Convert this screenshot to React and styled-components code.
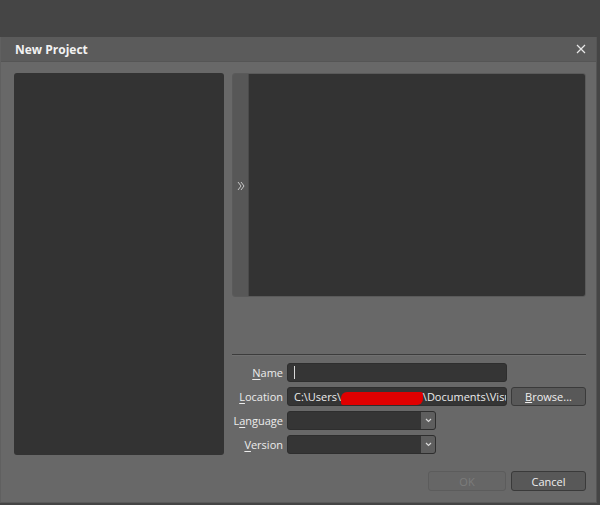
import React from 'react'
import styled, { createGlobalStyle } from 'styled-components'

const GlobalStyle = createGlobalStyle`
	html, body {
		margin: 0;
		padding: 0;
		background: #454545;
		font-family: "Open Sans", "Noto Sans", "DejaVu Sans", sans-serif;
	}
`

export default function App() {
	return (
		<>
			<GlobalStyle />
			<TopArea />
			<Dialog>
				<TitleBar>
					<Title>New Project</Title>
					<CloseButton aria-label='close'>
						<svg width='10' height='10' viewBox='0 0 10 10'>
							<path d='M1 1 L9 9 M9 1 L1 9' stroke='#e8e8e8' strokeWidth='1.2' />
						</svg>
					</CloseButton>
				</TitleBar>
				<Body>
					<TemplateList />
					<RightColumn>
						<Preview>
							<ExpandStrip>
								<svg width='8' height='10' viewBox='0 0 8 10'>
									<path d='M1 1 L4 5 L1 9 M4 1 L7 5 L4 9' stroke='#c8c8c8' strokeWidth='1' fill='none' />
								</svg>
							</ExpandStrip>
							<PreviewArea />
						</Preview>
						<Separator />
						<Form>
							<Label><u>N</u>ame</Label>
							<TextBox><Caret /></TextBox>
							<span />

							<Label><u>L</u>ocation</Label>
							<TextBox>
								<PathText>
									C:\Users\..<Redact />\Documents\Visu
								</PathText>
							</TextBox>
							<Button><u>B</u>rowse...</Button>

							<Label>L<u>a</u>nguage</Label>
							<Combo>
								<ComboDrop>
									<svg width='7' height='5' viewBox='0 0 7 5'>
										<path d='M1 1 L3.5 3.5 L6 1' stroke='#d8d8d8' strokeWidth='1.2' fill='none' />
									</svg>
								</ComboDrop>
							</Combo>
							<span />

							<Label><u>V</u>ersion</Label>
							<Combo>
								<ComboDrop>
									<svg width='7' height='5' viewBox='0 0 7 5'>
										<path d='M1 1 L3.5 3.5 L6 1' stroke='#d8d8d8' strokeWidth='1.2' fill='none' />
									</svg>
								</ComboDrop>
							</Combo>
							<span />
						</Form>
					</RightColumn>
				</Body>
				<Footer>
					<Button disabled wide>OK</Button>
					<Button>Cancel</Button>
				</Footer>
			</Dialog>
		</>
	)
}

// STYLED COMPONENTS
const TopArea = styled.div`
	height: 37px;
	background: #454545;
`
const Dialog = styled.div`
	width: 597px;
	height: 466px;
	box-sizing: border-box;
	background: #686868;
	border-right: 1px solid #555;
	border-bottom: 1px solid #5a5a5a;
	border-left: 1px solid #606060;
	display: flex;
	flex-direction: column;
`
const TitleBar = styled.div`
	height: 24px;
	background: #5b5b5b;
	border-bottom: 1px solid #555;
	display: flex;
	align-items: center;
	justify-content: space-between;
	padding: 0 10px 0 14px;
`
const Title = styled.span`
	color: #f2f2f2;
	font-size: 12px;
	font-weight: 700;
`
const CloseButton = styled.span`
	display: flex;
	align-items: center;
`
const Body = styled.div`
	display: grid;
	grid-template-columns: 210px 354px;
	gap: 8px;
	padding: 11px 0 0 13px;
`
const TemplateList = styled.div`
	height: 382px;
	background: #333;
	border-radius: 3px;
`
const RightColumn = styled.div`
	display: flex;
	flex-direction: column;
`
const Preview = styled.div`
	height: 224px;
	display: flex;
	border-radius: 3px;
	overflow: hidden;
	border: 1px solid #5a5a5a;
	box-sizing: border-box;
`
const ExpandStrip = styled.div`
	width: 15px;
	background: #575757;
	border-right: 1px solid #4a4a4a;
	display: flex;
	align-items: center;
	justify-content: center;
	padding-top: 2px;
`
const PreviewArea = styled.div`
	flex: 1;
	background: #333;
`
const Separator = styled.div`
	margin-top: 57px;
	height: 1px;
	background: #3c3c3c;
	border-bottom: 1px solid #707070;
`
const Form = styled.div`
	margin-top: 7px;
	display: grid;
	grid-template-columns: 51px 220px 75px;
	column-gap: 4px;
	row-gap: 5px;
	grid-auto-rows: 19px;
`
const Label = styled.span`
	color: #ececec;
	font-size: 11px;
	text-align: right;
	line-height: 19px;
	white-space: nowrap;
	u {
		text-underline-offset: 2px;
	}
`
const TextBox = styled.div`
	background: #353535;
	border: 1px solid #2e2e2e;
	border-radius: 3px;
	box-sizing: border-box;
	overflow: hidden;
	display: flex;
	align-items: center;
	padding-left: 6px;
	min-width: 0;
`
const Caret = styled.span`
	width: 1px;
	height: 13px;
	background: #d8d8d8;
`
const PathText = styled.span`
	display: block;
	flex: 1;
	min-width: 0;
	overflow: hidden;
	color: #ececec;
	font-size: 11px;
	line-height: 17px;
	white-space: nowrap;
`
const Redact = styled.span`
	display: inline-block;
	width: 82px;
	height: 13px;
	background: #e00000;
	border-radius: 6px 2px 6px 2px;
	vertical-align: middle;
	margin-left: -6px;
`
const Combo = styled.div`
	width: 149px;
	background: #353535;
	border: 1px solid #2e2e2e;
	border-radius: 3px;
	box-sizing: border-box;
	display: flex;
	justify-content: flex-end;
	overflow: hidden;
`
const ComboDrop = styled.div`
	width: 14px;
	background: #5e5e5e;
	display: flex;
	align-items: center;
	justify-content: center;
`
const Button = styled.button`
	height: 19px;
	width: ${({ wide }) => (wide ? '78px' : '75px')};
	padding: 0;
	font-family: inherit;
	font-size: 11px;
	border-radius: 3px;
	border: 1px solid ${({ disabled }) => (disabled ? '#5c5c5c' : '#3a3a3a')};
	background: ${({ disabled }) => (disabled ? '#666' : '#585858')};
	color: ${({ disabled }) => (disabled ? '#7c7c7c' : '#efefef')};
	box-sizing: border-box;
`
const Footer = styled.div`
	display: flex;
	justify-content: flex-end;
	gap: 5px;
	padding: 16px 10px 0 0;
	button {
		height: 20px;
	}
`
